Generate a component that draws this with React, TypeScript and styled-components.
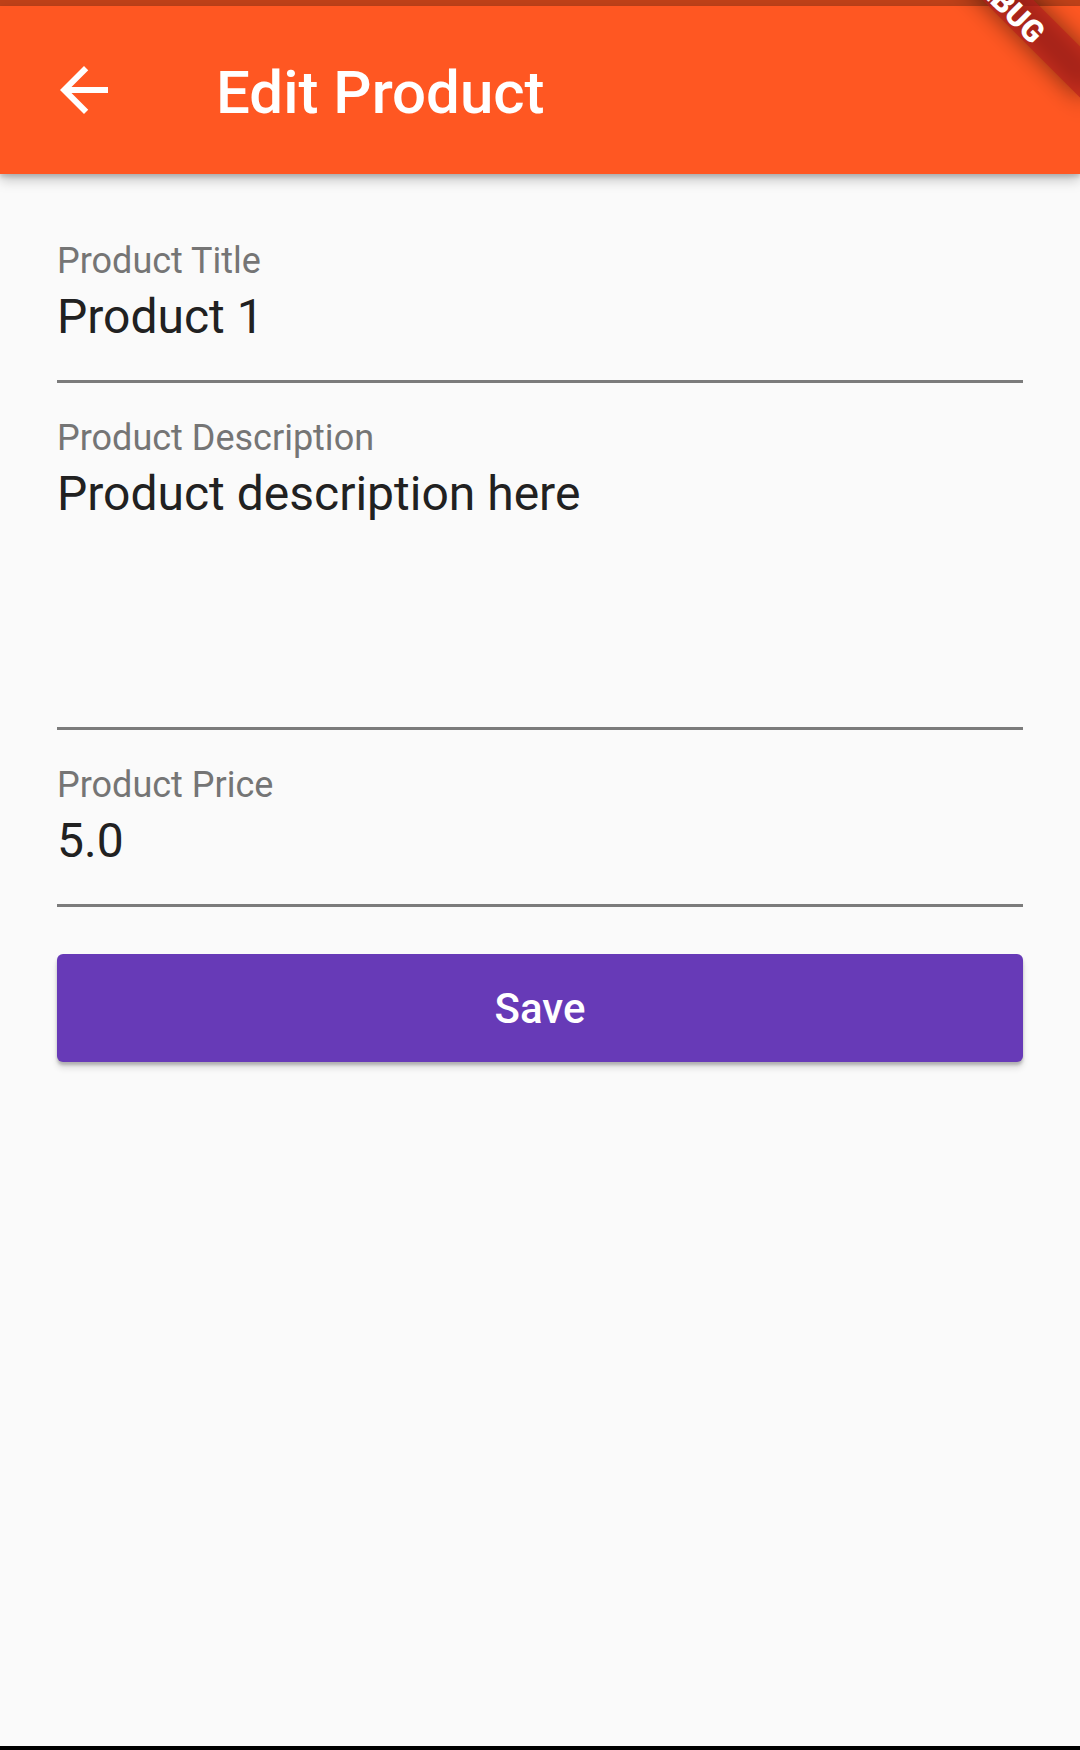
import * as React from 'react';
import styled, { createGlobalStyle } from 'styled-components';
import { MdArrowBack } from 'react-icons/md';

const GlobalStyle = createGlobalStyle`
  html, body {
    margin: 0;
    padding: 0;
    background: #fafafa;
  }
  body {
    font-family: Roboto, "Noto Sans", "Liberation Sans", sans-serif;
  }
`;

const Screen = styled.div`
  position: relative;
  width: 1080px;
  height: 1750px;
  overflow: hidden;
  display: flex;
  flex-direction: column;
  background: #fafafa;
`;

const StatusStrip = styled.div`
  height: 6px;
  flex-shrink: 0;
  background: #bf4119;
`;

const AppBar = styled.header`
  position: relative;
  z-index: 1;
  height: 168px;
  flex-shrink: 0;
  display: flex;
  align-items: center;
  background: #ff5722;
  box-shadow: 0 6px 12px rgba(0, 0, 0, 0.22), 0 3px 4px rgba(0, 0, 0, 0.14);
`;

const BackButton = styled.button`
  width: 72px;
  height: 72px;
  margin-left: 48px;
  padding: 0;
  border: 0;
  background: transparent;
  color: #ffffff;
  display: flex;
  align-items: center;
  justify-content: center;
`;

const Title = styled.h1`
  margin: 5px 0 0 96px;
  font-size: 60px;
  line-height: 60px;
  font-weight: 500;
  color: #ffffff;
`;

// flutter's debug banner, pinned to the top-right corner
const Ribbon = styled.div`
  position: absolute;
  left: 888px;
  top: -18px;
  width: 240px;
  height: 36px;
  z-index: 5;
  transform: rotate(45deg);

  &::before {
    content: '';
    position: absolute;
    inset: 0;
    background: rgba(0, 0, 0, 0.5);
    filter: blur(12px);
  }

  &::after {
    content: '';
    position: absolute;
    inset: 0;
    background: rgba(183, 28, 28, 0.627);
  }
`;

const RibbonText = styled.span`
  position: relative;
  z-index: 1;
  display: block;
  text-align: center;
  font-size: 30.6px;
  line-height: 36px;
  font-weight: 900;
  color: #ffffff;
  transform: translateY(5px);
`;

const Form = styled.main`
  flex: 1;
  padding: 32px 57px 0;
  display: flex;
  flex-direction: column;
`;

const Field = styled.div`
  padding: 37px 0 39px;
  border-bottom: 3px solid #7b7b7b;
`;

const Label = styled.div`
  font-size: 36px;
  line-height: 36px;
  color: #757575;
`;

const Value = styled.div<{ $lines?: number }>`
  margin-top: 14px;
  min-height: ${(p) => (p.$lines && p.$lines > 1 ? 218 : 48)}px;
  font-size: 48px;
  line-height: 48px;
  color: #212121;
`;

const SaveButton = styled.button`
  margin-top: 47px;
  height: 108px;
  border: 0;
  border-radius: 6px;
  background: #673ab7;
  color: #ffffff;
  font-family: Roboto, "Noto Sans", "Liberation Sans", sans-serif;
  font-size: 42px;
  font-weight: 500;
  box-shadow: 0 3px 3px rgba(0, 0, 0, 0.2), 0 6px 6px rgba(0, 0, 0, 0.12);
`;

const NavStrip = styled.div`
  height: 4px;
  flex-shrink: 0;
  background: #000000;
`;

const fields = [
  { label: 'Product Title', value: 'Product 1', lines: 1 },
  { label: 'Product Description', value: 'Product description here', lines: 3 },
  { label: 'Product Price', value: '5.0', lines: 1 },
];

const App = (): React.ReactElement => (
  <>
    <GlobalStyle />
    <Screen>
      <StatusStrip />
      <AppBar>
        <BackButton aria-label="Back">
          <MdArrowBack size={72} />
        </BackButton>
        <Title>Edit Product</Title>
      </AppBar>
      <Ribbon>
        <RibbonText>DEBUG</RibbonText>
      </Ribbon>
      <Form>
        {fields.map((f) => (
          <Field key={f.label}>
            <Label>{f.label}</Label>
            <Value $lines={f.lines}>{f.value}</Value>
          </Field>
        ))}
        <SaveButton>Save</SaveButton>
      </Form>
      <NavStrip />
    </Screen>
  </>
);

export default App;
